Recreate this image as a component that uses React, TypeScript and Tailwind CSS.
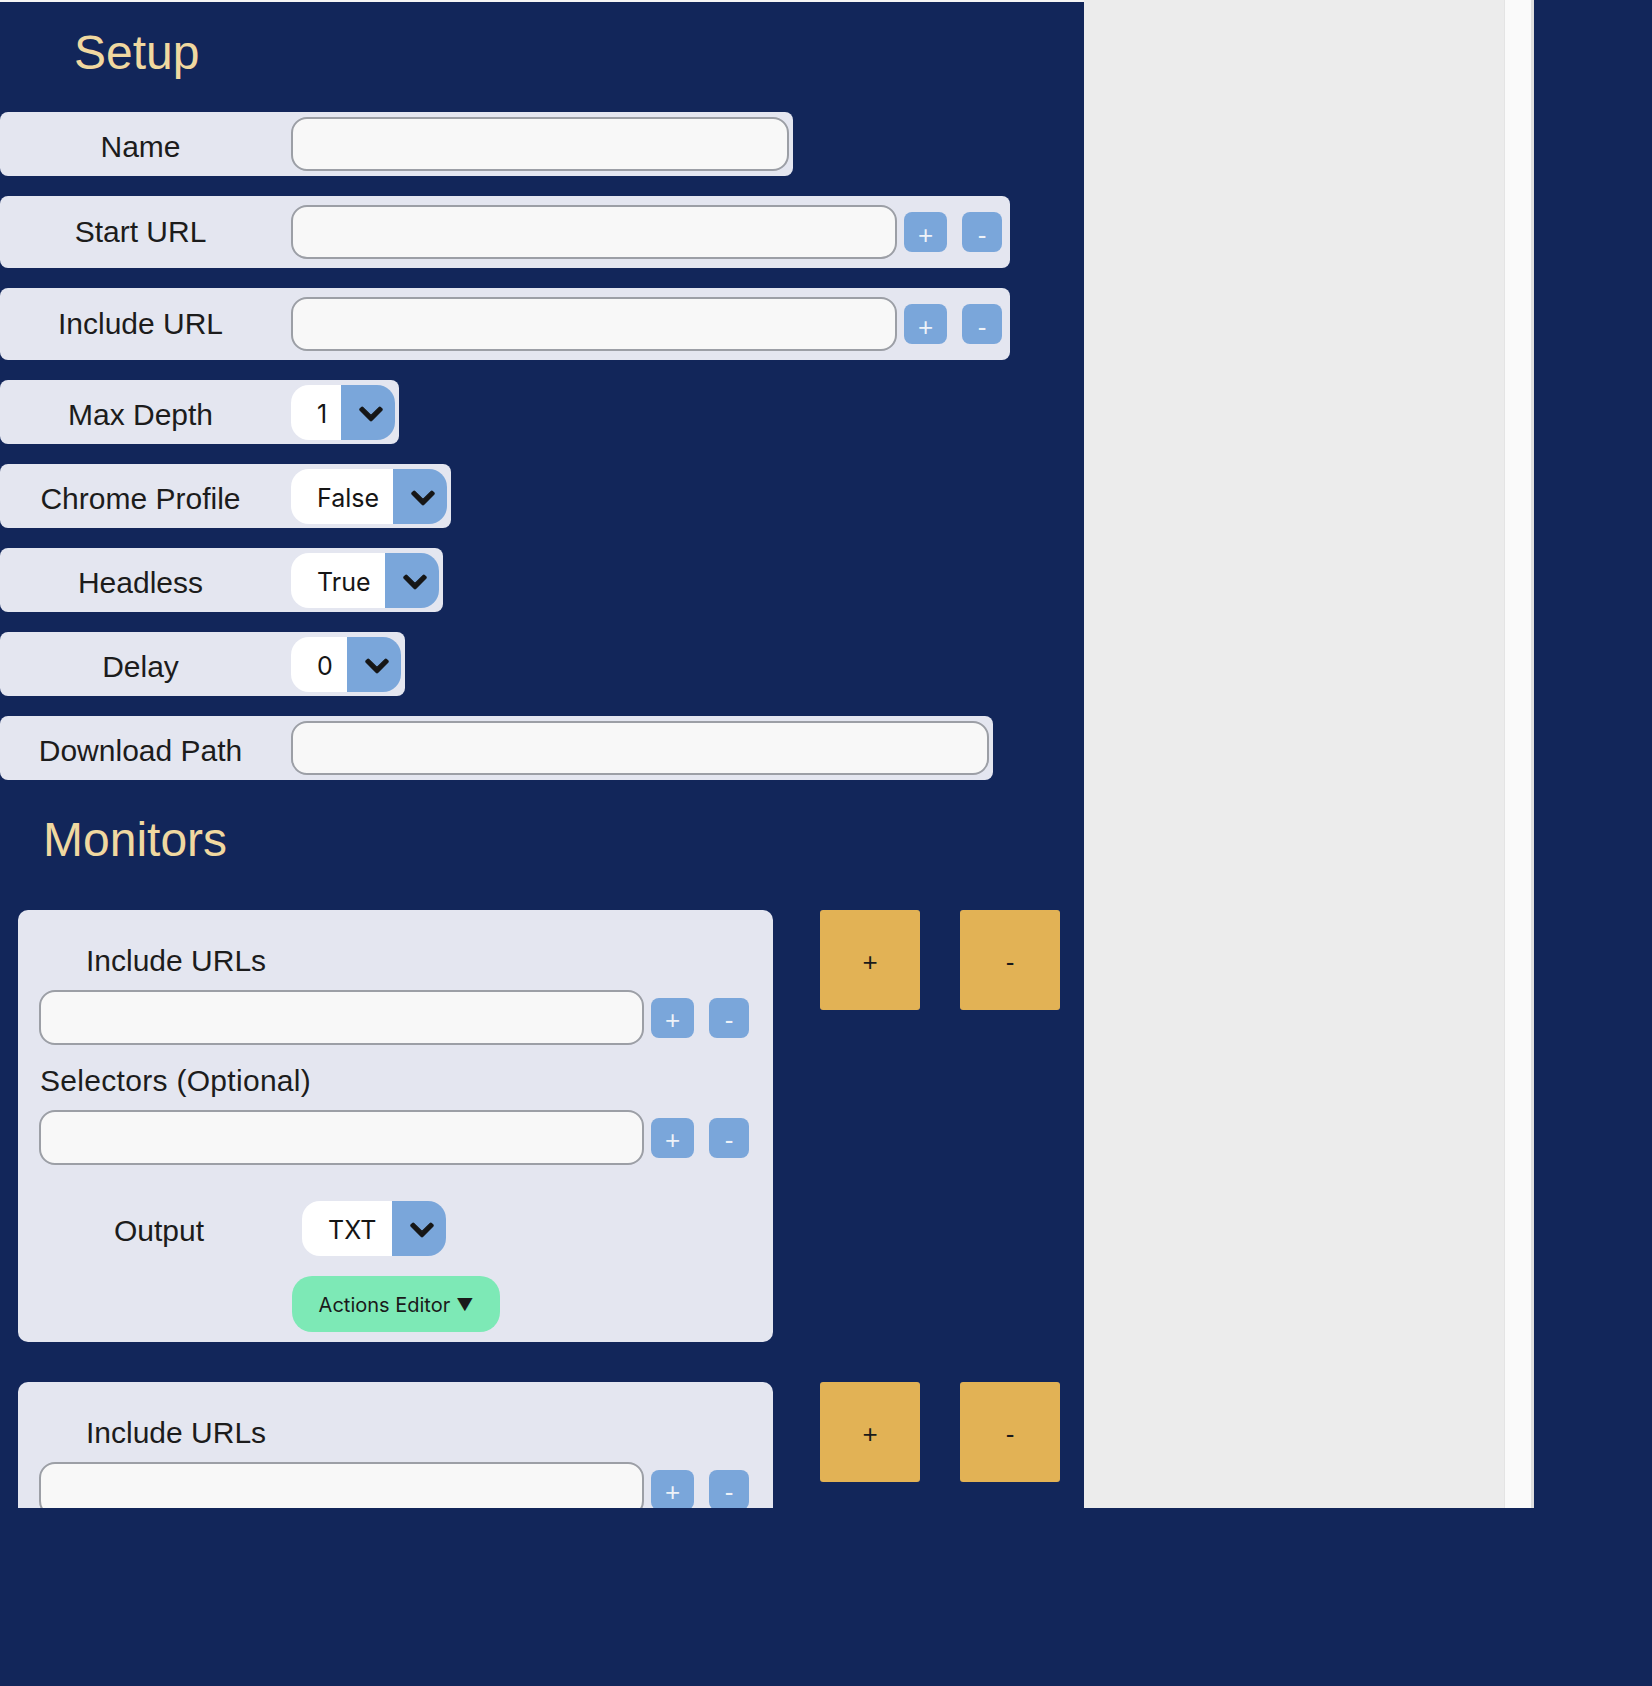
import React from "react";

// Solid chevron used on the select toggles
function Chevron() {
  return (
    <svg viewBox="-10 105 468 302" width="24" height="16" aria-hidden="true">
      <path
        fill="#161616"
        stroke="#161616"
        strokeWidth="22"
        strokeLinejoin="round"
        d="M207.029 381.476L12.686 187.132c-9.373-9.373-9.373-24.569 0-33.941l22.667-22.667c9.357-9.357 24.522-9.375 33.901-.04L224 284.505l154.745-154.021c9.379-9.335 24.544-9.317 33.901.04l22.667 22.667c9.373 9.373 9.373 24.569 0 33.941L240.971 381.476c-9.373 9.372-24.569 9.372-33.942 0z"
      />
    </svg>
  );
}

function Select({ value, widthClass }: { value: string; widthClass: string }) {
  return (
    <div className="flex h-[55px] overflow-hidden rounded-[18px]">
      <div
        className={`flex items-center bg-white pl-[26px] pt-[5px] font-['Inter',sans-serif] text-[25px] leading-none text-[#151515] ${widthClass}`}
      >
        {value}
      </div>
      <div className="flex w-[54px] items-center justify-center bg-[#7aa6da] pl-[5px] pt-[3px]">
        <Chevron />
      </div>
    </div>
  );
}

function TextInput({ widthClass }: { widthClass: string }) {
  return (
    <input
      type="text"
      className={`h-[54px] rounded-[16px] border-2 border-[#9c9fa6] bg-[#f8f8f8] px-4 outline-none ${widthClass}`}
    />
  );
}

function AddRemove() {
  return (
    <>
      <button className="ml-[7px] flex h-[40px] w-[43px] items-center justify-center rounded-[8px] bg-[#7aa6da] pt-[5px] font-['Liberation_Sans',sans-serif] text-[26px] leading-none text-[#eef2f8]">
        +
      </button>
      <button className="ml-[15px] flex h-[40px] w-[40px] items-center justify-center rounded-[8px] bg-[#7aa6da] pt-[5px] font-['Liberation_Sans',sans-serif] text-[26px] leading-none text-[#eef2f8]">
        -
      </button>
    </>
  );
}

function Row({
  label,
  tall,
  padRight,
  children,
}: {
  label: string;
  tall?: boolean;
  padRight: string;
  children: React.ReactNode;
}) {
  return (
    <div
      className={`flex w-fit items-center rounded-[8px] bg-[#e4e6f0] ${tall ? "h-[72px]" : "h-[64px]"} ${padRight}`}
    >
      <div
        className={`w-[281px] text-center text-[30px] leading-none text-[#1c1c1c] ${tall ? "" : "pt-[6px]"}`}
      >
        {label}
      </div>
      <div className="ml-[10px] flex items-center">{children}</div>
    </div>
  );
}

function MonitorCard() {
  return (
    <div className="flex items-start">
      <div className="ml-[18px] h-[432px] w-[755px] shrink-0 rounded-[10px] bg-[#e4e6f0] px-[21px] pt-[36px] text-[#1c1c1c]">
        <div className="ml-[47px] text-[30px] leading-none">Include URLs</div>
        <div className="mt-[14px] flex h-[55px] items-center">
          <input
            type="text"
            className="h-[55px] w-[605px] rounded-[16px] border-2 border-[#9c9fa6] bg-[#f8f8f8] px-4 outline-none"
          />
          <AddRemove />
        </div>
        <div className="ml-[1px] mt-[21px] text-[30px] leading-none tracking-[0.3px]">Selectors (Optional)</div>
        <div className="mt-[14px] flex h-[55px] items-center">
          <input
            type="text"
            className="h-[55px] w-[605px] rounded-[16px] border-2 border-[#9c9fa6] bg-[#f8f8f8] px-4 outline-none"
          />
          <AddRemove />
        </div>
        <div className="mt-[35px] flex h-[56px] items-center">
          <div className="w-[263px] pl-[75px] pt-[6px] text-[30px] leading-none">Output</div>
          <Select value="TXT" widthClass="w-[90px]" />
        </div>
        <button className="ml-[253px] mt-[20px] flex h-[56px] w-[208px] items-center justify-center gap-[6px] rounded-[20px] bg-[#7de9b6] pt-[2px] font-['Inter',sans-serif] text-[20px] leading-none text-[#1a1a1a]">
          <span>Actions Editor</span>
          <span className="text-[17px]">▼</span>
        </button>
      </div>
      <button className="ml-[47px] flex h-[100px] w-[100px] shrink-0 items-center justify-center rounded-[3px] bg-[#e2b255] pt-[4px] text-[26px] leading-none text-[#1a1a1a]">
        +
      </button>
      <button className="ml-[40px] flex h-[100px] w-[100px] shrink-0 items-center justify-center rounded-[3px] bg-[#e2b255] pt-[4px] text-[26px] leading-none text-[#1a1a1a]">
        -
      </button>
    </div>
  );
}

export default function App() {
  return (
    <div className="min-h-screen w-full bg-[#12265a] font-['Liberation_Sans',Arial,sans-serif]">
      <div className="flex h-[1508px]">
        {/* Configuration form */}
        <div className="h-full w-[1084px] shrink-0 overflow-hidden border-t-2 border-[#f5f5f5] bg-[#12265a]">
          <h1 className="ml-[74px] mt-[27px] text-[48px] font-normal leading-none text-[#f0d8a0]">Setup</h1>

          <div className="mt-[35px] flex flex-col gap-[20px]">
            <Row label="Name" padRight="pr-[4px]">
              <TextInput widthClass="w-[498px]" />
            </Row>
            <Row label="Start URL" tall padRight="pr-[8px]">
              <TextInput widthClass="w-[606px]" />
              <AddRemove />
            </Row>
            <Row label="Include URL" tall padRight="pr-[8px]">
              <TextInput widthClass="w-[606px]" />
              <AddRemove />
            </Row>
            <Row label="Max Depth" padRight="pr-[4px]">
              <Select value="1" widthClass="w-[50px]" />
            </Row>
            <Row label="Chrome Profile" padRight="pr-[4px]">
              <Select value="False" widthClass="w-[102px]" />
            </Row>
            <Row label="Headless" padRight="pr-[4px]">
              <Select value="True" widthClass="w-[94px]" />
            </Row>
            <Row label="Delay" padRight="pr-[4px]">
              <Select value="0" widthClass="w-[56px]" />
            </Row>
            <Row label="Download Path" padRight="pr-[4px]">
              <TextInput widthClass="w-[698px]" />
            </Row>
          </div>

          <h2 className="ml-[43px] mt-[36px] text-[48px] font-normal leading-none text-[#f0d8a0]">Monitors</h2>

          <div className="mt-[46px] flex flex-col gap-[40px]">
            <MonitorCard />
            <MonitorCard />
          </div>
        </div>

        {/* Output log pane with its scrollbar track */}
        <div className="h-full w-[420px] shrink-0 bg-[#ececec]" />
        <div className="h-full w-[27px] shrink-0 border-l border-[#e4e4e4] bg-[#fafafa]" />
        <div className="h-full w-[3px] shrink-0 bg-[#dedede]" />
      </div>
    </div>
  );
}
